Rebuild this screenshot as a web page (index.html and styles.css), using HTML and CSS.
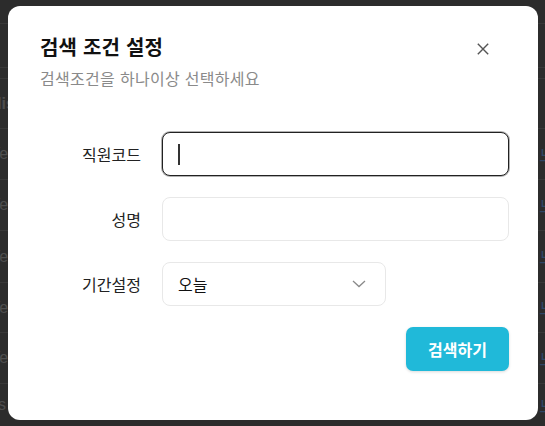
FILE: index.html
```html
<!DOCTYPE html>
<html lang="ko">
<head>
<meta charset="utf-8">
<link rel="stylesheet" href="styles.css">
</head>
<body>
<div class="page">
  <div class="row r1"><span class="lt">1</span></div>
  <div class="row r2"></div>
  <div class="row r3"></div>
  <div class="row r4"><span class="lt">His</span><span class="rt"></span></div>
  <div class="row r5"><span class="lt">Yes</span><span class="rt">느</span></div>
  <div class="row r5"><span class="lt">Yes</span><span class="rt">느</span></div>
  <div class="row r6"><span class="lt">Yes</span><span class="rt">느</span></div>
  <div class="row r7"><span class="lt">Yes</span><span class="rt">느</span></div>
  <div class="row r5"><span class="lt">Yes</span><span class="rt">느</span></div>
  <div class="row r8"><span class="lt">ss</span><span class="rt">느</span></div>
</div>

<div class="modal">
  <div class="modal-head">
    <div class="titles">
      <h1 class="title">검색 조건 설정</h1>
      <p class="subtitle">검색조건을 하나이상 선택하세요</p>
    </div>
    <button class="close" aria-label="닫기">
      <svg width="12" height="12" viewBox="0 0 12 12"><path d="M0.8 0.8 L11.2 11.2 M11.2 0.8 L0.8 11.2" stroke="#555" stroke-width="1.4" fill="none"/></svg>
    </button>
  </div>

  <div class="form">
    <label class="label">직원코드</label>
    <div class="field focused"><span class="caret"></span></div>

    <label class="label">성명</label>
    <div class="field"></div>

    <label class="label">기간설정</label>
    <div class="field select">
      <span class="value">오늘</span>
      <svg class="chev" width="14" height="8" viewBox="0 0 14 8"><path d="M1 1 L7 6.5 L13 1" stroke="#8a8a8a" stroke-width="1.3" fill="none"/></svg>
    </div>
  </div>

  <div class="actions">
    <button class="btn">검색하기</button>
  </div>
</div>
</body>
</html>
```

FILE: styles.css
```css
* { box-sizing: border-box; }
html, body { margin: 0; padding: 0; }
body {
  width: 545px;
  height: 426px;
  overflow: hidden;
  background: #2c2c2c;
  font-family: "Noto Sans CJK KR", "Noto Sans", sans-serif;
  position: relative;
}

.page { display: flex; flex-direction: column; }
.row {
  display: flex;
  justify-content: space-between;
  align-items: center;
  border-bottom: 1px solid #383838;
  font-family: "Liberation Sans", "Noto Sans CJK KR", sans-serif;
  font-size: 16px;
  color: #4e4e4e;
}
.lt { margin-left: -10px; }
.rt { margin-right: -10px; color: #2f4766; font-size: 17px; }
.r1 { height: 24px; }
.r2 { height: 44px; }
.r3 { height: 11px; }
.r4 { height: 50px; font-weight: bold; }
.r5 { height: 51px; }
.r6 { height: 52px; }
.r7 { height: 50px; }
.r8 { height: 42px; border-bottom: none; }

.modal {
  position: absolute;
  left: 8px;
  top: 6px;
  width: 530px;
  height: 414px;
  background: #fff;
  border-radius: 12px;
  padding: 27px 29px 0 32px;
}

.modal-head {
  display: flex;
  justify-content: space-between;
  align-items: flex-start;
}
.title {
  margin: 0;
  font-size: 20px;
  line-height: 28px;
  font-weight: 700;
  color: #111;
  letter-spacing: 0.2px;
}
.subtitle {
  margin: 6px 0 0;
  font-size: 16px;
  line-height: 22px;
  color: #8a8a8a;
  letter-spacing: 0.3px;
}
.close {
  border: 0;
  background: none;
  padding: 0;
  margin: 10px 20px 0 0;
  width: 12px;
  height: 12px;
  display: flex;
}

.form {
  margin-top: 43px;
  display: grid;
  grid-template-columns: 101px 347px;
  column-gap: 21px;
  row-gap: 21px;
  align-items: center;
}
.label {
  text-align: right;
  font-size: 16px;
  line-height: 22px;
  color: #222;
}
.field {
  height: 44px;
  border: 1px solid #e8e8e8;
  border-radius: 8px;
  background: #fff;
  display: flex;
  align-items: center;
  padding: 0 15px;
}
.field.focused {
  border-color: #222;
  box-shadow: 0 0 0 1px rgba(0,0,0,0.3);
}
.caret {
  display: block;
  width: 2px;
  height: 21px;
  background: #333;
}
.select {
  width: 224px;
  justify-content: space-between;
  padding-right: 19px;
}
.value {
  font-size: 16px;
  color: #111;
}

.actions {
  display: flex;
  justify-content: flex-end;
  margin-top: 21px;
}
.btn {
  width: 103px;
  height: 44px;
  border: 0;
  border-radius: 7px;
  background: #20b9d9;
  color: #fff;
  font-family: "Noto Sans CJK KR", sans-serif;
  font-size: 16px;
  font-weight: 700;
  box-shadow: 0 1px 3px rgba(0,0,0,0.15);
}
```
